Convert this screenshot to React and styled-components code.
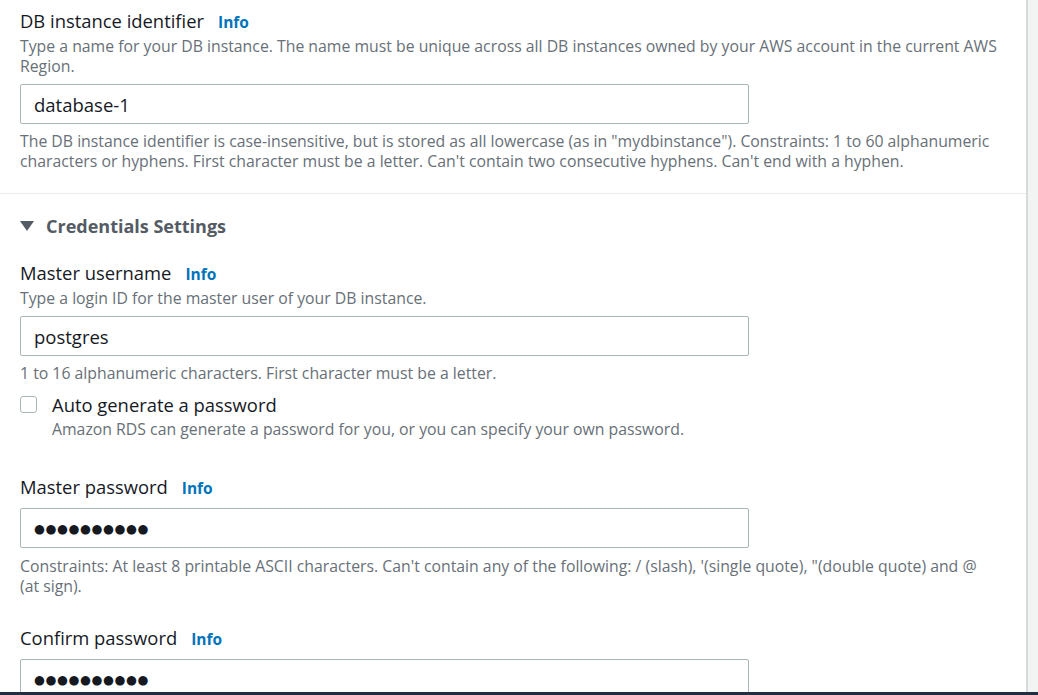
import React from 'react'
import styled, { createGlobalStyle } from 'styled-components'

const Global = createGlobalStyle`
  html, body {
    margin: 0;
    padding: 0;
    background: #f2f3f3;
    font-family: "Open Sans", "Liberation Sans", Arial, sans-serif;
    color: #16191f;
  }
`;

const Page = styled.div`
  display: flex;
  min-height: 100vh;
`;

const Panel = styled.div`
  width: 1028px;
  background: #ffffff;
  border-right: 2px solid #d5dbdb;
  box-sizing: border-box;
`;

const Section = styled.div`
  padding: ${p => (p.$divided ? '8px 20px 22px 20px' : '19px 20px 22px 20px')};
  border-bottom: ${p => (p.$divided ? '1px solid #eaeded' : 'none')};
`;

const Field = styled.div`
  margin-top: ${p => p.$top || 0}px;
`;

const LabelRow = styled.div`
  display: flex;
  align-items: baseline;
  gap: 14px;
  font-size: 18.4px;
  line-height: 26px;
  color: #16191f;
`;

const Info = styled.a`
  font-size: 15.5px;
  font-weight: 700;
  color: #0073bb;
  text-decoration: none;
`;

const Desc = styled.div`
  margin-top: 1px;
  font-size: 15.8px;
  line-height: 20px;
  color: #687078;
`;

const Help = styled.div`
  margin-top: ${p => p.$top || 7}px;
  max-width: 976px;
  font-size: 15.8px;
  line-height: 20px;
  color: #687078;
`;

const Input = styled.div`
  margin-top: ${p => p.$top || 8}px;
  width: 729px;
  height: 40px;
  box-sizing: border-box;
  border: 1px solid #aab7b8;
  border-radius: 2px;
  padding: 0 13px;
  display: flex;
  align-items: center;
  font-size: 18.5px;
  color: #16191f;
  ${p => p.$secret && `
    font-family: "DejaVu Sans", sans-serif;
    font-size: 12.5px;
    letter-spacing: 0.6px;
    padding-top: 1px;
  `}
`;

const Heading = styled.div`
  display: flex;
  align-items: center;
  gap: 12px;
  font-size: 18px;
  line-height: 26px;
  font-weight: 700;
  color: #545b64;
`;

const Caret = styled.span`
  width: 0;
  height: 0;
  border-left: 7px solid transparent;
  border-right: 7px solid transparent;
  border-top: 10px solid #545b64;
`;

const CheckRow = styled.label`
  display: flex;
  gap: 15px;
  margin-top: 10px;
`;

const Box = styled.span`
  flex: none;
  width: 17px;
  height: 17px;
  margin-top: 3px;
  box-sizing: border-box;
  border: 1px solid #aab7b8;
  border-radius: 3px;
  background: #fff;
`;

const CheckTitle = styled.div`
  font-size: 18.4px;
  line-height: 24px;
`;

const CheckDesc = styled.div`
  margin-top: 2px;
  font-size: 15.8px;
  line-height: 20px;
  color: #687078;
`;

const BottomBar = styled.div`
  position: fixed;
  left: 0;
  right: 0;
  bottom: 0;
  height: 3px;
  background: #232f3e;
`;

const Label = ({ children }) => (
  <LabelRow>
    <span>{children}</span>
    <Info href="#">Info</Info>
  </LabelRow>
);

const App = () => {
  return (
    <>
      <Global />
      <Page>
        <Panel>
          <Section $divided>
            <Label>DB instance identifier</Label>
            <Desc>
              Type a name for your DB instance. The name must be unique across all DB instances owned by your AWS account in the current AWS Region.
            </Desc>
            <Input>database-1</Input>
            <Help>
              The DB instance identifier is case-insensitive, but is stored as all lowercase (as in "mydbinstance"). Constraints: 1 to 60 alphanumeric characters or hyphens. First character must be a letter. Can't contain two consecutive hyphens. Can't end with a hyphen.
            </Help>
          </Section>
          <Section>
            <Heading>
              <Caret />
              Credentials Settings
            </Heading>
            <Field $top={21}>
              <Label>Master username</Label>
              <Desc>Type a login ID for the master user of your DB instance.</Desc>
              <Input>postgres</Input>
              <Help>1 to 16 alphanumeric characters. First character must be a letter.</Help>
              <CheckRow>
                <Box />
                <div>
                  <CheckTitle>Auto generate a password</CheckTitle>
                  <CheckDesc>Amazon RDS can generate a password for you, or you can specify your own password.</CheckDesc>
                </div>
              </CheckRow>
            </Field>
            <Field $top={35}>
              <Label>Master password</Label>
              <Input $secret $top={7}>●●●●●●●●●●</Input>
              <Help $top={8}>
                Constraints: At least 8 printable ASCII characters. Can't contain any of the following: / (slash), '(single quote), "(double quote) and @ (at sign).
              </Help>
            </Field>
            <Field $top={29}>
              <Label>Confirm password</Label>
              <Input $secret $top={7}>●●●●●●●●●●</Input>
            </Field>
          </Section>
        </Panel>
      </Page>
      <BottomBar />
    </>
  )
}

export default App
